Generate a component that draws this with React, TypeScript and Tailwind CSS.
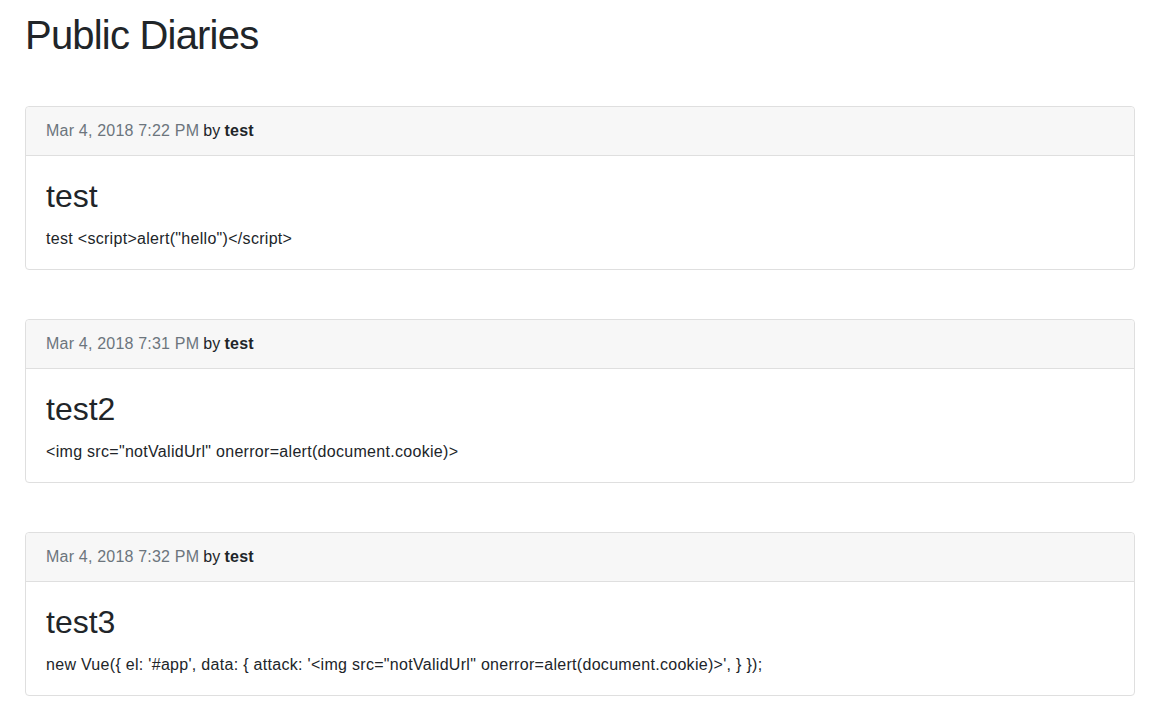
import React from 'react'

type Diary = {
  date: string
  author: string
  title: string
  body: string
}

const diaries: Diary[] = [
  { date: 'Mar 4, 2018 7:22 PM', author: 'test', title: 'test', body: 'test <script>alert("hello")</script>' },
  { date: 'Mar 4, 2018 7:31 PM', author: 'test', title: 'test2', body: '<img src="notValidUrl" onerror=alert(document.cookie)>' },
  {
    date: 'Mar 4, 2018 7:32 PM',
    author: 'test',
    title: 'test3',
    body: `new Vue({ el: '#app', data: { attack: '<img src="notValidUrl" onerror=alert(document.cookie)>', } });`,
  },
]

function DiaryCard({ diary }: { diary: Diary }) {
  return (
    <div className="border border-[#dfdfdf] rounded-[4px] bg-white">
      {/* header */}
      <div className="h-[49px] px-5 flex items-center bg-[#f7f7f7] border-b border-[#dfdfdf] rounded-t-[4px] text-base tracking-[0.2px]">
        <span className="text-[#6c757d]">{diary.date}</span>
        <span className="ml-[4px] text-[#212529]">by</span>
        <b className="ml-[4px] font-bold text-[#212529]">{diary.author}</b>
      </div>
      {/* body */}
      <div className="px-5 pt-[21px] pb-[18px]">
        <h3 className="text-[32px] leading-[38px] text-[#212529] mb-[12px]">{diary.title}</h3>
        <p className="text-[16px] leading-[24px] tracking-[0.3px] text-[#212529]">{diary.body}</p>
      </div>
    </div>
  )
}

export default function App() {
  return (
    <div className="min-h-screen bg-white font-['Liberation_Sans',Arial,sans-serif] text-[#212529]">
      <div className="w-[1110px] ml-[25px] pt-[11px]">
        <h1 className="text-[40px] leading-[48px] tracking-[-0.8px]">Public Diaries</h1>
        <div className="mt-[47px] flex flex-col gap-[49px]">
          {diaries.map((d, i) => (
            <DiaryCard key={i} diary={d} />
          ))}
        </div>
      </div>
    </div>
  )
}
